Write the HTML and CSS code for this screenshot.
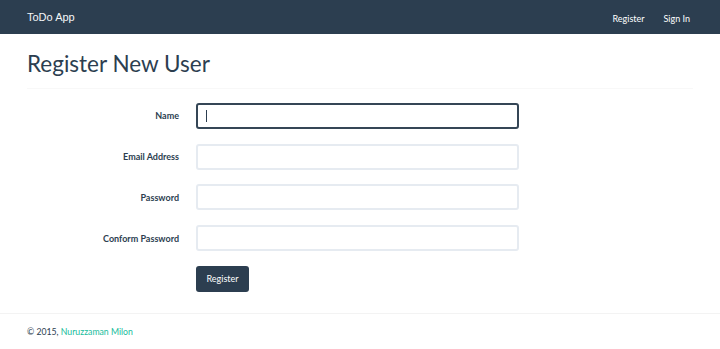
FILE: index.html
```html
<!DOCTYPE html>
<html lang="en">
<head>
    <meta charset="UTF-8">
    <meta name="viewport" content="width=device-width, initial-scale=1.0">
    <title>ToDo App</title>
    <link rel="stylesheet" href="styles.css">
</head>
<body>
    <div class="navbar">
        <a class="brand" href="#">ToDo App</a>
        <ul class="nav">
            <li><a href="#">Register</a></li>
            <li><a href="#">Sign In</a></li>
        </ul>
    </div>

    <div class="container">
        <div class="page-header">
            <h1>Register New User</h1>
        </div>

        <form class="register-form">
            <label for="name">Name</label>
            <div class="field">
                <input type="text" id="name" class="form-control focused">
                <span class="caret"></span>
            </div>

            <label for="email">Email Address</label>
            <input type="email" id="email" class="form-control">

            <label for="password">Password</label>
            <input type="password" id="password" class="form-control">

            <label for="confirm">Conform Password</label>
            <input type="password" id="confirm" class="form-control">

            <div></div>
            <div><button type="submit" class="btn">Register</button></div>
        </form>
    </div>

    <div class="footer">
        <p>&copy; 2015, <a href="#">Nuruzzaman Milon</a></p>
    </div>
</body>
</html>
```

FILE: styles.css
```css
* {
    margin: 0;
    padding: 0;
    box-sizing: border-box;
}

body {
    font-family: "Lato", "Open Sans", sans-serif;
    color: #2c3e50;
    background-color: #ffffff;
}

a {
    text-decoration: none;
}

.navbar {
    height: 34px;
    background-color: #2c3e50;
    display: flex;
    justify-content: space-between;
    align-items: center;
    padding: 0 30px 0 27px;
}

.brand {
    font-family: "Liberation Sans", Arial, sans-serif;
    font-size: 11px;
    color: #f4f6f8;
    margin-top: -1px;
}

.nav {
    list-style: none;
    display: flex;
    gap: 19px;
    margin-top: -3px;
}

.nav a {
    font-size: 9px;
    color: #ffffff;
}

.container {
    padding: 0 27px;
}

.page-header {
    margin-top: 18px;
    padding-bottom: 11px;
    border-bottom: 1px solid #f8f8f8;
}

h1 {
    font-size: 22.5px;
    font-weight: 400;
    line-height: 1.1;
    color: #2c3e50;
}

.register-form {
    display: grid;
    grid-template-columns: 152px 323px;
    column-gap: 17px;
    row-gap: 14.75px;
    margin-top: 14px;
    align-items: center;
}

.register-form label {
    text-align: right;
    font-size: 9px;
    font-weight: 700;
    color: #2c3e50;
}

.field {
    position: relative;
}

.form-control {
    display: block;
    width: 100%;
    height: 26px;
    border: 2px solid #e6ebf1;
    border-radius: 3px;
    background: #ffffff;
    outline: none;
    font-family: inherit;
    font-size: 9px;
    padding: 0 8px;
}

.form-control.focused {
    border-color: #354656;
}

.caret {
    position: absolute;
    left: 10px;
    top: 7px;
    width: 1px;
    height: 12px;
    background-color: #2c3e50;
}

.btn {
    width: 53px;
    height: 26px;
    border: none;
    border-radius: 3px;
    background-color: #2c3e50;
    color: #ffffff;
    font-family: inherit;
    font-size: 9px;
    cursor: pointer;
}

.footer {
    margin-top: 21px;
    border-top: 1px solid #f3f3f3;
    padding: 12px 27px 0;
}

.footer p {
    font-size: 8.7px;
    color: #2c3e50;
}

.footer a {
    color: #18bc9c;
}
```
